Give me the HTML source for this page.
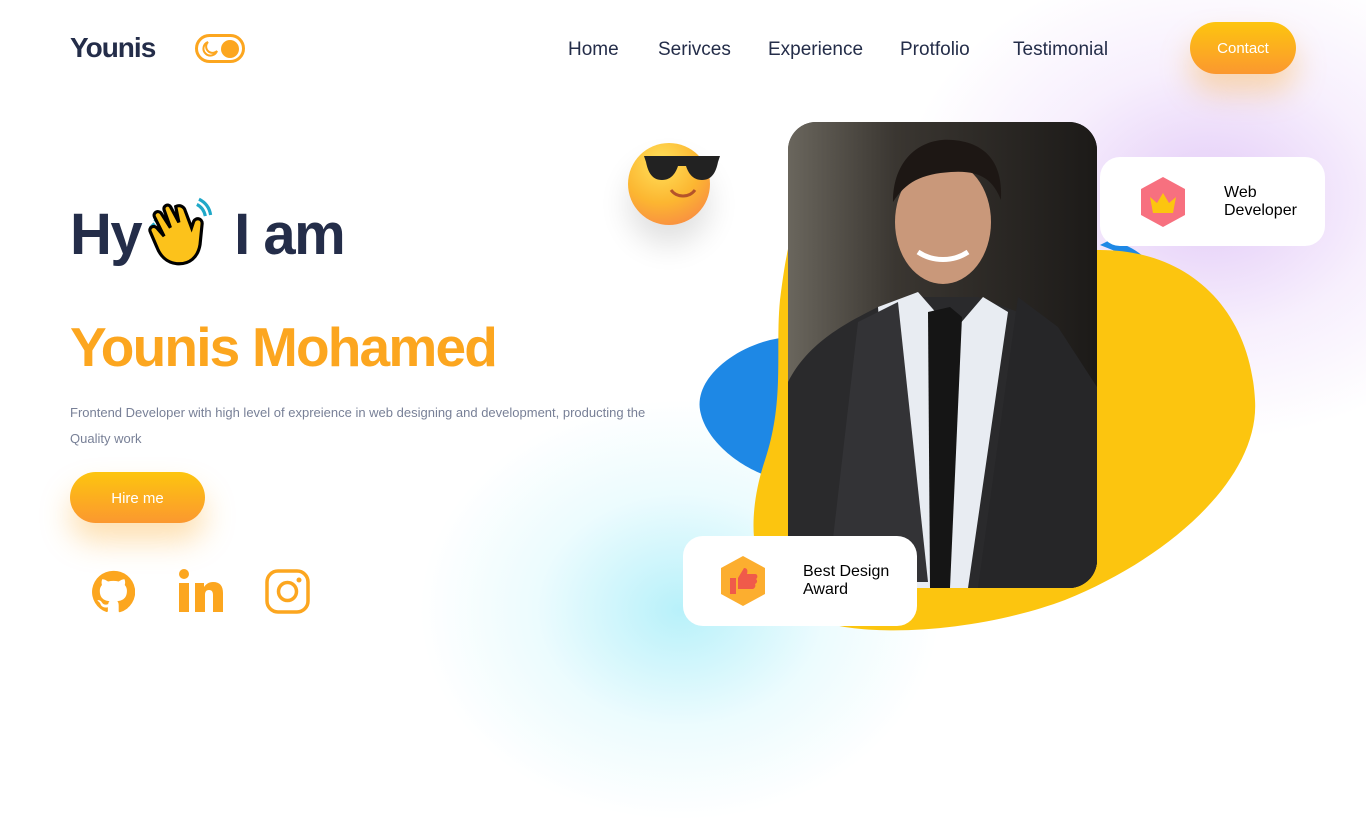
<!DOCTYPE html>
<html><head><meta charset="utf-8">
<style>
*{margin:0;padding:0;box-sizing:border-box}
body{width:1366px;height:768px;overflow:hidden;position:relative;background:#fff;font-family:"Liberation Sans",sans-serif;color:#242d49}
.glow1{position:absolute;left:420px;top:400px;width:520px;height:420px;border-radius:50%;background:radial-gradient(closest-side,rgba(160,236,248,.75),rgba(200,245,252,.35) 55%,rgba(255,255,255,0));}
.glow2{position:absolute;left:900px;top:-40px;width:620px;height:480px;border-radius:50%;background:radial-gradient(closest-side,rgba(220,190,245,.8),rgba(235,215,250,.4) 55%,rgba(255,255,255,0));}
.logo{position:absolute;left:70px;top:32px;font-size:28px;font-weight:bold;color:#242d49;letter-spacing:-1px}
.toggle{position:absolute;left:195px;top:34px;width:50px;height:29px;border:3px solid #fca61f;border-radius:15px}
.toggle .dot{position:absolute;right:3px;top:3px;width:18px;height:18px;border-radius:50%;background:#fca61f}
nav{position:absolute;top:39px;left:568px;font-size:19px;color:#242d49}
nav span{position:absolute;white-space:nowrap}
.contact{position:absolute;left:1190px;top:22px;width:106px;height:52px;border-radius:26px;background:linear-gradient(180deg,#fdc50f,#fb982f);color:#fff;font-size:15px;text-align:center;line-height:54px;box-shadow:0 18px 30px rgba(252,166,31,.35)}
.hy{position:absolute;left:70px;top:201px;font-size:58px;font-weight:bold;color:#242d49;letter-spacing:-1.5px}
.name{position:absolute;left:70px;top:315px;font-size:55px;font-weight:bold;color:#fca61f;letter-spacing:-1.8px}
.desc{position:absolute;left:70px;top:400px;width:600px;font-size:13px;line-height:26px;color:#788097}
.hire{position:absolute;left:70px;top:472px;width:135px;height:51px;border-radius:26px;background:linear-gradient(180deg,#fdc50f,#fb982f);color:#fff;font-size:15px;text-align:center;line-height:54px;box-shadow:0 18px 30px rgba(252,166,31,.35)}
.card{position:absolute;background:#fff;border-radius:20px;font-size:16px;line-height:18px;color:#000}
.photo{position:absolute;left:788px;top:122px;width:309px;height:466px;border-radius:28px;overflow:hidden;background:linear-gradient(90deg,#5a5650 0%,#3b3833 30%,#2a2724 60%,#1e1c1a 100%)}
</style></head><body>
<div class="glow1"></div><div class="glow2"></div>
<div class="logo">Younis</div>
<div class="toggle"><svg style="position:absolute;left:2px;top:2px" width="20" height="20" viewBox="0 0 20 20"><path d="M8 3a7 7 0 1 0 9 9 6 6 0 0 1-9-9z" fill="none" stroke="#fca61f" stroke-width="2"/></svg><div class="dot"></div></div>
<nav><span style="left:0">Home</span><span style="left:90px">Serivces</span><span style="left:200px">Experience</span><span style="left:332px">Protfolio</span><span style="left:445px">Testimonial</span></nav>
<div class="contact">Contact</div>

<div class="hy">Hy<span style="display:inline-block;width:93px"></span>I am</div>
<svg style="position:absolute;left:144px;top:196px" width="74" height="74" viewBox="0 0 70 70">
<path d="M18 30 L10 22 M6 30 L10 26" stroke="#1fa8c8" stroke-width="3" fill="none"/>
<path d="M30 10c4-2 8 0 9 4l6 16 2-6c2-4 8-3 8 2l-2 20c-2 12-10 19-22 18-10-1-16-8-19-16L6 34c-2-4 3-7 6-4l7 8-9-18c-2-4 3-7 6-4l9 14-6-17c-1-4 4-6 6-3l8 15-3-15z" fill="#fcc21b" stroke="#000" stroke-width="3"/>
<path d="M50 8c4 2 7 6 8 11M52 3c6 3 10 8 11 15" stroke="#1fa8c8" stroke-width="3" fill="none"/>
</svg>
<div class="name">Younis Mohamed</div>
<div class="desc">Frontend Developer with high level of expreience in web designing and development, producting the Quality work</div>
<div class="hire">Hire me</div>

<svg style="position:absolute;left:91px;top:570px" width="44" height="44" viewBox="0 0 24 24"><path fill="#fca61f" d="M12 .5A11.5 11.5 0 0 0 8.4 22.9c.6.1.8-.2.8-.6v-2c-3.2.7-3.9-1.5-3.900-1.5-.5-1.3-1.3-1.7-1.3-1.7-1-.7.1-.7.1-.7 1.2.1 1.800 1.2 1.8 1.2 1 1.8 2.8 1.3 3.5 1 .1-.8.4-1.3.7-1.6-2.6-.3-5.3-1.3-5.3-5.7 0-1.3.5-2.3 1.2-3.1-.1-.3-.5-1.5.1-3.1 0 0 1-.3 3.2 1.2a11 11 0 0 1 5.8 0c2.2-1.5 3.2-1.2 3.2-1.2.6 1.6.2 2.8.1 3.1.8.8 1.2 1.9 1.2 3.1 0 4.4-2.7 5.4-5.3 5.7.4.4.8 1.1.8 2.2v3.2c0 .4.2.7.8.6A11.5 11.5 0 0 0 12 .5z"/></svg>
<svg style="position:absolute;left:178px;top:569px" width="46" height="44" viewBox="0 0 46 44"><circle cx="6" cy="5" r="5" fill="#fca61f"/><rect x="1" y="14" width="10" height="29" fill="#fca61f"/><path d="M17 14h9v4c2-3 5-5 9-5 7 0 10 4 10 11v19h-10V26c0-3-1-5-4-5s-4 2-4 5v17H17z" fill="#fca61f"/></svg>
<svg style="position:absolute;left:265px;top:569px" width="45" height="45" viewBox="0 0 45 45"><rect x="2" y="2" width="41" height="41" rx="11" fill="none" stroke="#fca61f" stroke-width="3.5"/><circle cx="22.5" cy="22.5" r="9" fill="none" stroke="#fca61f" stroke-width="3.5"/><circle cx="34" cy="11" r="2.5" fill="#fca61f"/></svg>

<svg style="position:absolute;left:690px;top:200px" width="580" height="440" viewBox="0 0 580 440">
<path d="M80 140C40 150 5 180 10 210c5 30 40 60 80 70L180 120z" fill="#1e88e5"/>
<path d="M420 40c20 5 35 15 40 25L410 45z" fill="#1e88e5"/>
<path d="M110 20c60-20 190 30 300 30 90 0 150 60 155 150 5 80-90 160-190 200-80 30-190 40-250 20-70-25-70-100-50-160 20-60 10-110 15-160 5-40 10-70 20-80z" fill="#fcc50f"/>
</svg>

<div class="photo">
<svg width="309" height="466" viewBox="0 0 309 466">
<defs><linearGradient id="bg" x1="0" x2="1"><stop offset="0" stop-color="#6a665d"/><stop offset=".35" stop-color="#3a3631"/><stop offset="1" stop-color="#1c1a18"/></linearGradient></defs>
<rect width="309" height="466" fill="url(#bg)"/>
<path d="M0 260c20-40 60-60 90-75l40-10 60 0 40 15c30 15 60 40 79 80v196H0z" fill="#2a2a2c"/>
<path d="M90 185l40 -15 35 40 30-35 25 15-40 276H110z" fill="#e8ecf2"/>
<path d="M140 190l22-5 12 10-12 271h-20z" fill="#151515"/>
<path d="M70 200l40-20 30 280H40z" fill="#333336"/>
<path d="M230 175l40 30 39 60v201H190z" fill="#262628"/>
<ellipse cx="155" cy="100" rx="48" ry="62" fill="#c9987a"/>
<path d="M105 80c0-45 30-65 60-62 35 3 50 25 48 60-8-20-20-30-50-28-30 2-45 10-58 30z" fill="#1d1714"/>
<path d="M130 130c15 10 35 10 50 0" stroke="#fff" stroke-width="5" fill="none"/>
</svg>
</div>

<div style="position:absolute;left:628px;top:143px;width:82px;height:82px;border-radius:50%;background:radial-gradient(circle at 40% 25%,#ffe15a,#fcb631 50%,#f77a4a);box-shadow:0 20px 30px rgba(0,0,0,.12)"></div>
<svg style="position:absolute;left:640px;top:150px" width="84" height="40" viewBox="0 0 84 40"><path d="M4 6h76l-2 6c-2 10-6 18-16 18s-14-8-16-14h-8c-2 6-6 14-16 14S8 22 6 12z" fill="#222"/></svg>
<svg style="position:absolute;left:668px;top:186px" width="30" height="16"><path d="M3 4c6 8 18 8 24 0" stroke="#b5532a" stroke-width="3" fill="none"/></svg>

<div class="card" style="left:1100px;top:157px;width:225px;height:89px">
<svg style="position:absolute;left:38px;top:18px" width="50" height="54" viewBox="0 0 50 54"><path d="M25 2l22 12v26L25 52 3 40V14z" fill="#f7707f"/><path d="M12 22l7 6 6-10 6 10 7-6-3 16H15z" fill="#fcc50f"/></svg>
<div style="position:absolute;left:124px;top:27px">Web<br>Developer</div></div>
<div class="card" style="left:683px;top:536px;width:234px;height:90px">
<svg style="position:absolute;left:35px;top:18px" width="50" height="54" viewBox="0 0 50 54"><path d="M25 2l22 12v26L25 52 3 40V14z" fill="#fcae2f"/><path d="M12 24h6v16h-6zM20 24l6-10c3 0 4 2 3 6h8c3 0 3 4 1 5 2 2 1 4-1 5 1 2 0 4-2 5H20z" fill="#f05a4a"/></svg>
<div style="position:absolute;left:120px;top:27px">Best Design<br>Award</div></div>
</body></html>
